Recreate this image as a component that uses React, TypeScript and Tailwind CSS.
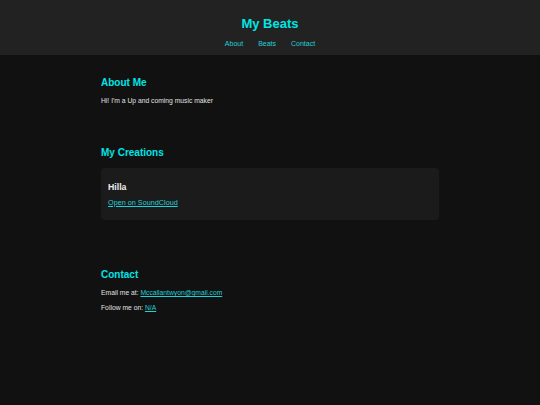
export default function App() {
  return (
    <div className="min-h-[405px] bg-[#111111] font-['Liberation_Sans',Arial,sans-serif] text-[#e0e0e0]">
      <header className="bg-[#222222] flex flex-col items-center pt-[15px] pb-[6px]">
        <h1 className="text-[13px] leading-[18px] font-bold text-[#00e5e5]">My Beats</h1>
        <nav className="mt-[6px] flex gap-[15px] text-[7px] leading-[10px] text-[#1fd0d6]">
          <a href="#about">About</a>
          <a href="#beats">Beats</a>
          <a href="#contact">Contact</a>
        </nav>
      </header>
      <main className="w-[338px] mx-auto pt-[20px]">
        <section>
          <h2 className="text-[10px] leading-[16px] font-bold text-[#00e5e5]">About Me</h2>
          <p className="mt-[5px] text-[6.75px] leading-[10px]">Hi! I'm a Up and coming music maker</p>
        </section>
        <section className="mt-[39px]">
          <h2 className="text-[10px] leading-[16px] font-bold text-[#00e5e5]">My Creations</h2>
          <div className="mt-[7px] bg-[#1b1b1b] rounded-[4px] px-[7px] pt-[14px] pb-[12px]">
            <h3 className="text-[8.75px] leading-[10px] font-bold text-[#eeeeee]">Hilla</h3>
            <a href="#" className="block mt-[6px] text-[7.25px] leading-[10px] text-[#1fd0d6] underline">Open on SoundCloud</a>
          </div>
        </section>
        <section className="mt-[47px]">
          <h2 className="text-[10px] leading-[16px] font-bold text-[#00e5e5]">Contact</h2>
          <p className="mt-[5px] text-[6.75px] leading-[10px]">
            Email me at: <a href="#" className="text-[#1fd0d6] underline">Mccallantwyon@gmail.com</a>
          </p>
          <p className="mt-[5px] text-[6.75px] leading-[10px]">
            Follow me on: <a href="#" className="text-[#1fd0d6] underline">N/A</a>
          </p>
        </section>
      </main>
    </div>
  );
}
